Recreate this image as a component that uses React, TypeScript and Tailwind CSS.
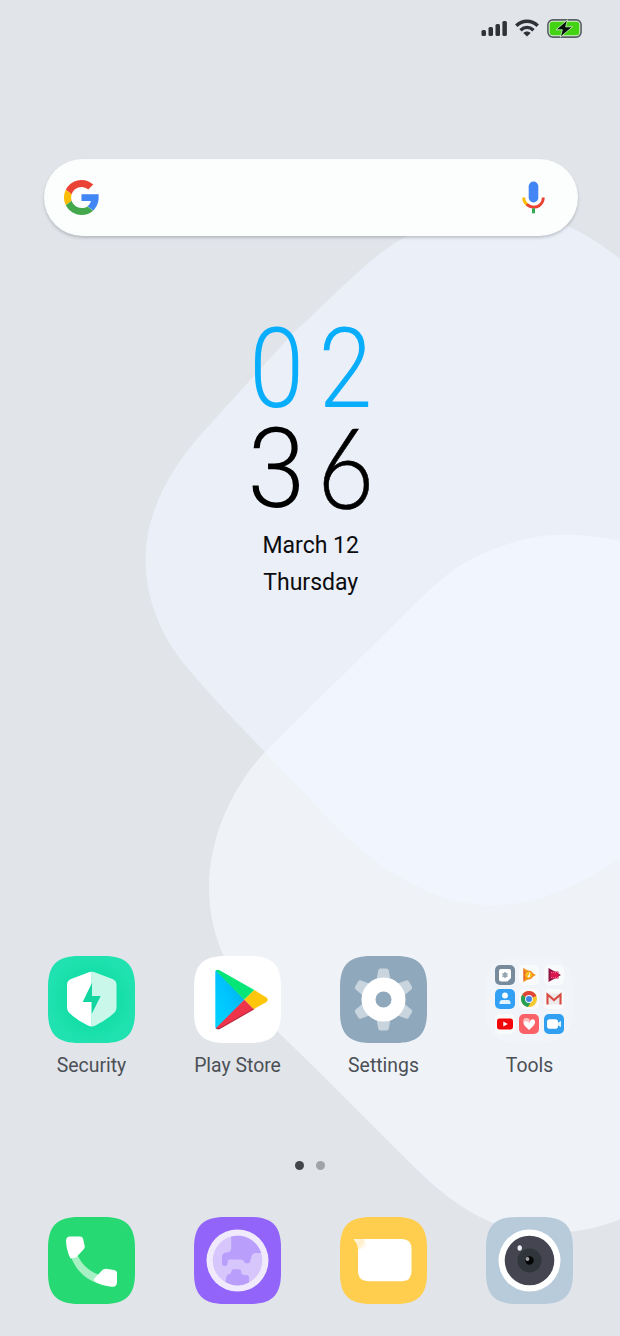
import type { ReactNode } from "react";

const SQUIRCLE =
  "M0 43.5V31C0 9 9 0 31 0H56C78 0 87 9 87 31V56C87 78 78 87 56 87H31C9 87 0 78 0 56Z";

function Wallpaper() {
  return (
    <svg className="absolute inset-0 h-full w-full" viewBox="0 0 620 1336" aria-hidden="true">
      <defs>
        <clipPath id="upper">
          <path d="M640 276C600 240 560 214 510 214C465 214 430 222 395 243C360 266 325 305 293 333L205 430C168 470 145.500 515 145.500 560C145.500 604 166 644 190 671C213 698 238 724 264 751L336 826C362 852 385 870 411 883C437 898 465 905 492 905C545 905 590 880 640 844Z" />
        </clipPath>
      </defs>
      <path d="M640 276C600 240 560 214 510 214C465 214 430 222 395 243C360 266 325 305 293 333L205 430C168 470 145.500 515 145.500 560C145.500 604 166 644 190 671C213 698 238 724 264 751L336 826C362 852 385 870 411 883C437 898 465 905 492 905C545 905 590 880 640 844Z" fill="#ebeff8" />
      <path d="M640 546C610 538 590 535 563 535C528 535 500 545 470 560C447 572 432 588 415 604L264 753C230 790 209 840 209 888C209 930 225 967 250 1000C270 1026 292 1045 312 1065L395 1148C425 1178 450 1203 486 1220C508 1230 540 1235 569 1232C595 1229 618 1222 640 1210Z" fill="#eff3f8" />
      <path clipPath="url(#upper)" d="M640 546C610 538 590 535 563 535C528 535 500 545 470 560C447 572 432 588 415 604L264 753C230 790 209 840 209 888C209 930 225 967 250 1000L640 1000Z" fill="#f1f5fd" />
    </svg>
  );
}

function StatusBar() {
  return (
    <header className="flex h-14 items-center justify-end gap-2 pr-[38px]">
      <svg width="26" height="18" viewBox="0 0 26 18" fill="#2f3338">
        <rect x="0.500" y="11" width="4.500" height="6" rx="1.500" />
        <rect x="7.500" y="8" width="4.500" height="9" rx="1.500" />
        <rect x="14.500" y="5" width="4.500" height="12" rx="1.500" />
        <rect x="21.400" y="2" width="4.500" height="15" rx="1.500" />
      </svg>
      <svg width="24" height="18" viewBox="0 0 24 18" fill="none" stroke="#2f3338" strokeWidth="3.500">
        <path d="M1.300 6.700C7.500 0.700 16.500 0.700 22.700 6.700" />
        <path d="M5.500 11.200C9.500 7.600 14.500 7.600 18.500 11.200" />
        <path d="M8.300 14C10.500 12 13.500 12 15.700 14L12 17.500Z" fill="#2f3338" stroke="none" />
      </svg>
      <svg width="35" height="19" viewBox="0 0 35 19">
        <rect x="0.900" y="0.900" width="33.200" height="17.200" rx="5" fill="#d9efd3" stroke="#596066" strokeWidth="1.600" />
        <rect x="2.700" y="2.700" width="29.600" height="13.600" rx="3" fill="#44d313" />
        <path d="M20.500 0.800L9 10.800H15.300L13.300 18.200L25.500 7.800H18.700Z" fill="#07130a" stroke="#d8f5cf" strokeWidth="0.800" />
      </svg>
    </header>
  );
}

function SearchBar() {
  return (
    <div className="mr-[42px] ml-[43.500px] mt-[102.500px] flex h-[77px] items-center justify-between rounded-full bg-[#fcfdfd] pr-[33px] pl-[20px] shadow-[0_2px_3px_rgba(80,85,95,0.28)]">
      <svg width="35" height="35" viewBox="0 0 48 48">
        <path fill="#ea4335" d="M24 9.500c3.540 0 6.710 1.220 9.210 3.600l6.850-6.850C35.900 2.380 30.470 0 24 0 14.620 0 6.510 5.380 2.560 13.220l7.980 6.190C12.430 13.720 17.740 9.500 24 9.500z" />
        <path fill="#4285f4" d="M47.500 19.500H24V28.800H36.940c-.58 2.960-2.260 5.480-4.780 7.180l7.730 6C44.400 37.800 47.500 31.650 47.500 24z" />
        <path fill="#fbbc05" d="M10.530 28.590c-.48-1.450-.76-2.990-.76-4.590s.27-3.140.76-4.590l-7.980-6.190C.92 16.460 0 20.120 0 24c0 3.880.92 7.540 2.560 10.780l7.970-6.190z" />
        <path fill="#43a84b" d="M24 48c6.480 0 11.930-2.130 15.890-5.810l-7.730-6c-2.150 1.450-4.920 2.300-8.160 2.300-6.260 0-11.570-4.220-13.470-9.910l-7.980 6.190C6.510 42.620 14.620 48 24 48z" />
      </svg>
      <svg width="23" height="33" viewBox="0 0 23 33">
        <rect x="6.700" y="0.500" width="9.600" height="21" rx="4.800" fill="#4285f4" />
        <path d="M1.700 16.500C1.700 19.500 2.900 22 5.300 23.700" fill="none" stroke="#fbbc05" strokeWidth="3" />
        <path d="M4.800 23.300C6.500 25 8.800 26.200 11.500 26.200C17 26.200 21.300 22 21.300 16.500" fill="none" stroke="#ea4335" strokeWidth="2.800" />
        <path d="M11.500 27.300V32.300" stroke="#34a853" strokeWidth="3" />
      </svg>
    </div>
  );
}

function Clock() {
  return (
    <section className="mt-[83.500px] flex flex-col items-center pl-[1.500px]">
      <div className="flex h-[100px] gap-1 text-[112px] leading-[100px] font-light text-[#08aefb]">
        <span className="w-[65px] scale-x-[0.880] text-center">0</span>
        <span className="w-[65px] scale-x-[0.860] text-center">2</span>
      </div>
      <div className="flex h-[100px] gap-1 text-[112px] leading-[100px] font-light text-black">
        <span className="w-[65px] scale-x-[0.930] text-center">3</span>
        <span className="w-[65px] -translate-y-[4.500px] scale-x-[0.870] text-center font-['Lato','Roboto',sans-serif] text-[113px] [-webkit-text-stroke:0.700px_#000]">6</span>
      </div>
      <p className="mt-[8px] text-[23px] leading-[37px] text-[#0b0c0f]">March 12</p>
      <p className="text-[23px] leading-[37px] text-[#0b0c0f]">Thursday</p>
    </section>
  );
}

function Tile({ fill, children }: { fill: string; children: ReactNode }) {
  return (
    <svg width="87" height="87" viewBox="0 0 87 87">
      <path d={SQUIRCLE} fill={fill} />
      {children}
    </svg>
  );
}

function SecurityIcon() {
  return (
    <Tile fill="url(#mint)">
      <defs>
        <radialGradient id="mint">
          <stop offset="0.500" stopColor="#12dda5" />
          <stop offset="1" stopColor="#20e2b0" />
        </radialGradient>
      </defs>
      <path d="M43.700 15.700Q42 15.700 39 17L23 23Q19 24.500 19 29V51Q19 55 22 57.500Q30 65 40 69.500Q42 70.400 43.700 70.400Z" fill="#fff" />
      <path d="M43.700 15.700Q45.500 15.700 48.500 17L64.500 23Q68.500 24.500 68.500 29V51Q68.500 55 65.500 57.500Q57 65 47.500 69.500Q45.500 70.400 43.700 70.400Z" fill="#c9f8eb" />
      <path d="M44 26.700L34.700 46H43.700V58L52.700 40H44Z" fill="#13d5a0" />
    </Tile>
  );
}

function PlayIcon() {
  return (
    <Tile fill="#fff">
      <defs>
        <linearGradient id="sky" x1="0" y1="1" x2="1" y2="0">
          <stop offset="0" stopColor="#00d5ff" />
          <stop offset="0.500" stopColor="#00c3ff" />
          <stop offset="1" stopColor="#00acd8" />
        </linearGradient>
      </defs>
      <path d="M21.300 16V71Q21.300 74 24 72.500L50.300 43.700L24 14.500Q21.300 13 21.300 16Z" fill="url(#sky)" />
      <path d="M22 15Q23.500 13 26 14.500L60.300 34L50.300 43.700Z" fill="#06e678" />
      <path d="M60.300 34L72 41.300Q75.500 43.700 72 46.200L59.700 53.200L50.300 43.700Z" fill="#ffc60a" />
      <path d="M50.300 43.700L59.700 53.200L26 72.500Q23.500 74 22 72Z" fill="#ee344a" />
      <path d="M22.500 72Q24 73.300 26 72.200L59.700 53" fill="none" stroke="#bd2c43" strokeWidth="1.200" />
    </Tile>
  );
}

function SettingsIcon() {
  return (
    <Tile fill="#8fa8bb">
      {[0, 60, 120, 180, 240, 300].map((a) => (
        <path key={a} transform={`rotate(${a} 43.500 43.500)`} d="M36.500 24L38.200 14.500Q38.600 12.500 40.500 12.500H46.500Q48.400 12.500 48.800 14.500L50.500 24Z" fill="#c8d4de" />
      ))}
      <circle cx="43.500" cy="43.500" r="15" fill="none" stroke="#fff" strokeWidth="14" />
    </Tile>
  );
}

function PhoneIcon() {
  return (
    <Tile fill="#27d973">
      <path d="M21 34C25 49 34 61 50 66.500L52 58C42 55 34 48 29.500 38Z" fill="#a6f0c4" />
      <path d="M22 19.500H32Q34.500 19.500 35 21.500L36.700 29Q37 31 35.500 32.500L28 40.500L22.500 41.500Q18.500 34 18 24Q18 19.500 22 19.500Z" fill="#fff" />
      <path d="M46 62L52.500 55Q55 51.500 58 51.700L66 53Q69 53.500 69 56V65Q69 70.500 63.500 69.700Q54 69 46.500 64.500Z" fill="#fff" />
    </Tile>
  );
}

function BrowserIcon() {
  return (
    <Tile fill="#9264fa">
      <circle cx="43.500" cy="43.500" r="31" fill="#f1eafc" />
      <circle cx="43.500" cy="43.500" r="24.800" fill="#d7c6fc" />
      <path d="M37.200 19.500V31Q37.200 35 33 35.500Q28 35.500 28 40V46Q28 49 31 49Q33.500 49 33.500 46Q33.500 42.500 36 42.500H47Q49.500 42.500 50 44.500Q50.500 46.500 53 46.500Q56 46.500 56.500 43L57.500 39.500Q58 36 62 36H67.200A24.800 24.800 0 0 0 37.200 19.500Z" fill="#b99efb" />
      <path d="M40 52.300H45Q47.300 52.300 47.300 55Q47.300 58 50 58H52.500Q55 58 55 61V65.500A24.800 24.800 0 0 1 31.700 65.300Q31.500 64.500 32.200 61Q32.500 57.500 35 57.200Q37 57 37.200 55Q37.500 52.300 40 52.300Z" fill="#b99efb" />
    </Tile>
  );
}

function MessagesIcon() {
  return (
    <Tile fill="#ffce4e">
      <defs>
        <linearGradient id="fold" x1="13" y1="22" x2="26" y2="31" gradientUnits="userSpaceOnUse">
          <stop offset="0" stopColor="#fff7df" />
          <stop offset="0.550" stopColor="#fff0ca" />
          <stop offset="1" stopColor="#fff" />
        </linearGradient>
      </defs>
      <path d="M18 22H62Q71.500 22 71.500 32V54Q71.500 64.200 62 64.200H29Q18 64.200 18 54Z" fill="#fff" />
      <path d="M13.500 22H24L27 31L18.200 32Q17 26 13.500 22Z" fill="url(#fold)" />
    </Tile>
  );
}

function CameraIcon() {
  return (
    <Tile fill="#b8cbda">
      <circle cx="43.500" cy="43.500" r="31" fill="#fff" />
      <circle cx="43.500" cy="43.500" r="24.800" fill="#444550" />
      <circle cx="43.500" cy="43.500" r="12" fill="#30353c" />
      <circle cx="43.500" cy="43.500" r="4.200" fill="#050506" />
      <circle cx="41.500" cy="42" r="1.900" fill="#9da0a4" />
      <ellipse cx="33.700" cy="31" rx="2.200" ry="2.700" fill="#edf1f6" />
    </Tile>
  );
}

function Mini({ fill = "#f8fafc", children }: { fill?: string; children: ReactNode }) {
  return (
    <svg width="20" height="20" viewBox="0 0 20 20">
      <rect width="20" height="20" rx="5" fill={fill} />
      {children}
    </svg>
  );
}

function ToolsFolder() {
  return (
    <div className="grid h-[87px] w-[87px] grid-cols-[20px_20px_20px] content-start gap-[4.300px] rounded-[28px] bg-white/15 pt-[9px] pl-[9px]">
      <Mini fill="#778b9c">
        <path d="M6 4H14Q16 4 16 6V13L12.500 16.500H6Q4 16.500 4 14.500V6Q4 4 6 4Z" fill="#fff" />
        <path d="M10 7V13M7.400 8.500L12.600 11.500M12.600 8.500L7.400 11.500" stroke="#98a6b2" strokeWidth="1.500" />
      </Mini>
      <Mini>
        <path d="M4.500 3L17 10L4.500 17Z" fill="#f59b1c" />
        <path d="M4.500 3V17L7 10Z" fill="#e7562e" />
        <circle cx="9.700" cy="10" r="4" fill="#fbbd20" stroke="#ed7d20" />
        <path d="M10.500 7.500V11.300" stroke="#fff" strokeWidth="0.800" />
        <circle cx="9.700" cy="11.300" r="1" fill="#fff" />
      </Mini>
      <Mini>
        <path d="M4.500 3L17 10L4.500 17Z" fill="#8d1744" />
        <path d="M6.500 6.500H14.500V13.500H6.500Z" fill="#db1750" />
        <path d="M7 7.500H14M7 12.500H14" stroke="#f080a0" strokeWidth="0.800" strokeDasharray="1 1" />
      </Mini>
      <Mini fill="#31a0f5">
        <circle cx="10" cy="6.500" r="2.900" fill="#fff" />
        <path d="M4.500 14Q4.500 11 7.500 11H12.500Q15.500 11 15.500 14V15H4.500Z" fill="#e4f4ff" />
      </Mini>
      <Mini>
        <circle cx="10" cy="10" r="8" fill="#f6c82c" />
        <path d="M10 10L3.070 6A8 8 0 0 1 17.400 7Z" fill="#df4639" />
        <path d="M10 10L3.070 6A8 8 0 0 0 9 17.940L13 11Z" fill="#299e55" />
        <circle cx="10" cy="10" r="3.900" fill="#f5f8fa" />
        <circle cx="10" cy="10" r="3" fill="#4285e8" />
      </Mini>
      <Mini>
        <rect x="2.500" y="4.500" width="15" height="11" rx="1" fill="#eceaea" />
        <path d="M3.500 15.500V5.500L10 11L16.500 5.500V15.500" fill="none" stroke="#d94b40" strokeWidth="2.100" />
      </Mini>
      <Mini>
        <rect x="2" y="4.500" width="16" height="11" rx="2.700" fill="#f20509" />
        <path d="M8.300 7.500L12.800 10L8.300 12.500Z" fill="#fff" />
      </Mini>
      <Mini fill="#fa6268">
        <circle cx="7.500" cy="7.500" r="3.400" fill="#ffc0bf" />
        <path d="M10 16L5.500 11.500C3.500 9 6 6 9 8L10.500 9C11 4 16.500 4 16 8.500C16 10.500 13 13.500 10 16Z" fill="#fff" />
      </Mini>
      <Mini fill="#31a0f0">
        <rect x="3" y="5.300" width="11" height="9.400" rx="2.800" fill="#fff" />
        <path d="M13.500 9L17 6.700V13.300L13.500 11Z" fill="#e4f4ff" />
      </Mini>
    </div>
  );
}

function App() {
  const apps = [
    { name: "Security", icon: <SecurityIcon /> },
    { name: "Play Store", icon: <PlayIcon /> },
    { name: "Settings", icon: <SettingsIcon /> },
    { name: "Tools", icon: <ToolsFolder /> },
  ];
  return (
    <main className="relative h-[1336px] w-[620px] overflow-hidden bg-[#e1e4e9] font-['Roboto',sans-serif]">
      <Wallpaper />
      <div className="relative flex h-full flex-col">
        <StatusBar />
        <SearchBar />
        <Clock />
        <div className="mt-auto grid grid-cols-4 pr-[17.500px] pl-[18.500px]">
          {apps.map((app) => (
            <div key={app.name} className="flex flex-col items-center gap-[10px]">
              {app.icon}
              <span className="text-[19.400px] leading-[26px] whitespace-nowrap text-[#4c5056]">{app.name}</span>
            </div>
          ))}
        </div>
        <div className="mt-[82px] flex justify-center gap-3">
          <i className="h-[9px] w-[9px] rounded-full bg-[#42454a]" />
          <i className="h-[9px] w-[9px] rounded-full bg-[#a0a3a8]" />
        </div>
        <nav className="mt-[46.500px] mb-[32.500px] grid grid-cols-4 justify-items-center pr-[18px] pl-[18px]">
          <PhoneIcon />
          <BrowserIcon />
          <MessagesIcon />
          <CameraIcon />
        </nav>
      </div>
    </main>
  );
}

export default App;
